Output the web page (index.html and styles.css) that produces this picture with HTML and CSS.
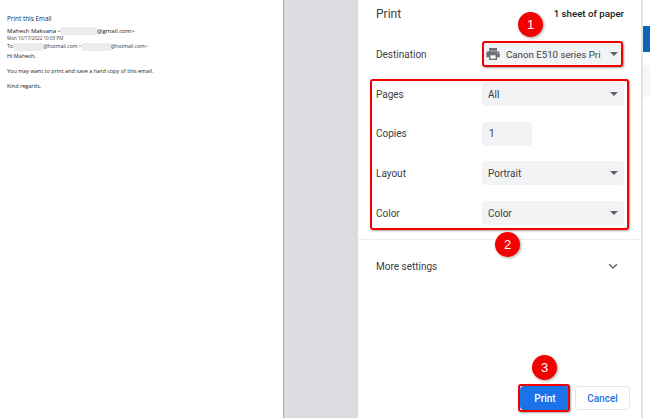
FILE: index.html
```html
<!DOCTYPE html>
<html lang="en">
<head>
<meta charset="utf-8">
<title>Print</title>
<link rel="stylesheet" href="styles.css">
</head>
<body>
<div class="app">
  <main class="sheet">
    <h1 class="mail-title">Print this Email</h1>
    <div class="from"><b>Mahesh Makvana</b> &lt;<span class="redact r-from"></span>@gmail.com&gt;</div>
    <div class="date">Mon 10/17/2022 10:03 PM</div>
    <div class="to">To:<span class="redact r-to1"></span>@hotmail.com &lt;<span class="redact r-to2"></span>@hotmail.com&gt;</div>
    <p class="hi">Hi Mahesh,</p>
    <p class="body-line">You may want to print and save a hard copy of this email.</p>
    <p class="body-line">Kind regards,</p>
  </main>
  <div class="preview-bg"></div>
  <aside class="panel">
    <header class="panel-head">
      <span class="panel-title">Print</span>
      <span class="sheets">1 sheet of paper</span>
    </header>
    <div class="row row-dest">
      <label class="row-label">Destination</label>
      <div class="dest">
        <svg class="printer" width="16" height="16" viewBox="0 0 24 24"><path fill="#6b6f73" d="M19 8H5c-1.66 0-3 1.34-3 3v6h4v4h12v-4h4v-6c0-1.66-1.34-3-3-3zm-3 11H8v-5h8v5zm3-7c-.55 0-1-.45-1-1s.45-1 1-1 1 .45 1 1-.45 1-1 1zm-1-9H6v4h12V3z"/></svg>
        <span class="dest-name">Canon E510 series Pri</span>
        <i class="caret"></i>
      </div>
    </div>
    <div class="options">
      <div class="row"><label class="row-label">Pages</label><div class="select">All<i class="caret"></i></div></div>
      <div class="row"><label class="row-label">Copies</label><div class="copies">1</div></div>
      <div class="row"><label class="row-label">Layout</label><div class="select">Portrait<i class="caret"></i></div></div>
      <div class="row"><label class="row-label">Color</label><div class="select">Color<i class="caret"></i></div></div>
    </div>
    <div class="more">
      <span>More settings</span>
      <svg width="10" height="7" viewBox="0 0 10 7"><path d="M1.2 1.2 5 5 8.8 1.2" fill="none" stroke="#5f6368" stroke-width="1.4"/></svg>
    </div>
    <footer class="actions">
      <button class="btn btn-print">Print</button>
      <button class="btn btn-cancel">Cancel</button>
    </footer>
    <div class="mark mark-dest"></div>
    <div class="mark mark-options"></div>
    <div class="mark mark-print"></div>
    <div class="badge badge-1">1</div>
    <div class="badge badge-2">2</div>
    <div class="badge badge-3">3</div>
  </aside>
  <div class="strip">
    <div class="strip-blue"></div>
    <div class="strip-gray"></div>
  </div>
</div>
</body>
</html>
```
FILE: styles.css
```css
* { box-sizing: border-box; }
html, body { margin: 0; padding: 0; }
body { width: 650px; height: 418px; overflow: hidden; background: #fff; font-family: Roboto, "Liberation Sans", sans-serif; }
.app { display: flex; height: 418px; }

.sheet { width: 284px; padding: 14px 0 0 7px; font-family: "Open Sans", "Liberation Sans", sans-serif; color: #222; font-size: 5.8px; line-height: 8px; border-right: 1px solid #a9aaad; }
.mail-title { margin: 0 0 4px; font-size: 6.4px; font-weight: 400; line-height: 9px; color: #14284f; }
.from { font-size: 6px; line-height: 9px; color: #111; }
.from b { font-weight: 400; }
.date { font-size: 4.6px; line-height: 5px; margin-top: 0; color: #444; }
.to { font-size: 5.1px; line-height: 8px; margin-top: 1px; color: #333; }
.redact { display: inline-block; height: 8px; vertical-align: middle; background: #ececee; }
.r-from { width: 36px; }
.r-to1 { width: 29px; }
.r-to2 { width: 29px; }
.hi { margin: 1.5px 0 0; font-size: 5.5px; line-height: 8px; }
.body-line { margin: 7px 0 0; font-size: 5.5px; line-height: 8px; }

.preview-bg { width: 74px; background: #dadce0; }

.panel { position: relative; width: 283px; padding: 0 17px 0 18px; background: #fff; color: #3c4043; font-size: 10px; display: flex; flex-direction: column; }
.panel-head { display: flex; justify-content: space-between; align-items: center; height: 27px; }
.panel-title { font-size: 12px; color: #3c4043; }
.sheets { font-size: 9.7px; font-weight: 500; color: #202124; }

.row { display: flex; align-items: center; height: 24px; }
.row-dest { margin-top: 15px; }
.row-label { width: 106px; flex: none; font-size: 10px; color: #3c4043; }

.dest { width: 142px; height: 24px; display: flex; align-items: center; padding: 0 5px 0 3px; background: #f1f3f4; border-radius: 4px; position: relative; }
.printer { flex: none; }
.dest-name { margin-left: 5px; font-size: 9.7px; white-space: nowrap; color: #3c4043; }
.select { width: 142px; height: 24px; padding-left: 6px; display: flex; align-items: center; justify-content: space-between; background: #f1f3f4; border-radius: 4px; font-size: 10px; color: #3c4043; position: relative; }
.copies { width: 50px; height: 24px; padding-left: 7px; display: flex; align-items: center; background: #f1f3f4; border-radius: 4px; font-size: 10px; }
.caret { position: absolute; right: 6px; top: 10px; width: 0; height: 0; border-left: 4px solid transparent; border-right: 4px solid transparent; border-top: 4px solid #5f6368; }

.options { margin-top: 16px; display: flex; flex-direction: column; gap: 15.7px; padding-bottom: 14px; }

.more { margin: 0 -17px 0 -18px; padding: 0 23px 0 18px; height: 54px; border-top: 1px solid #eeeeef; display: flex; align-items: center; justify-content: space-between; font-size: 10px; }

.actions { margin-top: auto; padding-bottom: 8px; display: flex; justify-content: flex-end; gap: 5px; margin-right: -6px; }
.btn { height: 24px; border-radius: 4px; font-family: inherit; font-size: 10px; font-weight: 500; padding: 0; }
.btn-print { width: 50px; background: #1a73e8; border: 0; color: #fff; }
.btn-cancel { width: 55px; background: #fff; border: 1px solid #e4e6e8; color: #1a73e8; }

.mark { position: absolute; border: 2px solid #f40000; border-radius: 3px; box-shadow: 1px 1px 2px rgba(0,0,0,.35); }
.mark-dest { left: 124px; top: 41px; width: 141px; height: 26px; }
.mark-options { left: 12px; top: 79px; width: 259px; height: 151px; }
.mark-print { left: 160px; top: 384px; width: 52px; height: 28px; }

.badge { position: absolute; width: 25px; height: 25px; border-radius: 50%; background: #f40000; color: #fff; font-family: "Liberation Sans", sans-serif; font-size: 13px; line-height: 25px; text-align: center; box-shadow: 1px 1px 3px rgba(0,0,0,.35); }
.badge-1 { left: 160px; top: 12px; }
.badge-2 { left: 137px; top: 232px; }
.badge-3 { left: 174px; top: 355px; }

.strip { flex: 1; border-left: 2px solid #e3e3e4; padding-top: 26px; }
.strip-blue { height: 26px; background: #0b65b9; }
.strip-gray { height: 32px; margin-top: 13px; background: #f6f6f7; }
```
